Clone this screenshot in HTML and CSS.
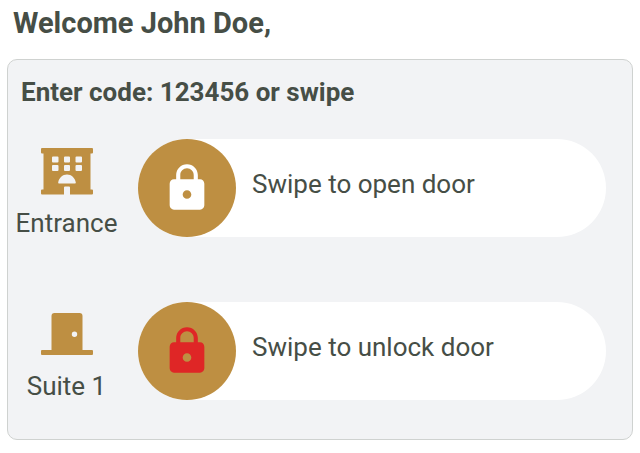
FILE: index.html
```
<!DOCTYPE html>
<html lang="en">
<head>
    <meta charset="utf-8" />
    <meta name="viewport" content="width=device-width, initial-scale=1" />
    <title>Door access</title>
    <link rel="stylesheet" href="styles.css">
</head>
<body>
    <h1 class="welcome">Welcome John Doe,</h1>
    <main class="panel">
        <h2 class="code">Enter code: 123456 or swipe</h2>

        <!-- entrance -->
        <div class="door">
            <div class="place">
                <svg class="place-icon" viewBox="0 0 52 47" aria-hidden="true">
                    <path fill-rule="evenodd" d="M1 0H51Q52 0 52 1V4.500Q52 5.500 51 5.500H49.500V41.500H51Q52 41.500 52 42.500V45.500Q52 46.500 51 46.500H29V39.500Q29 38.500 28 38.500H24Q23 38.500 23 39.500V46.500H1Q0 46.500 0 45.500V42.500Q0 41.500 1 41.500H2.500V5.500H1Q0 5.500 0 4.500V1Q0 0 1 0Z
                        M12 8.500h4.500q1 0 1 1v4q0 1-1 1H12q-1 0-1-1v-4q0-1 1-1Z
                        M24 8.500h4q1 0 1 1v4q0 1-1 1h-4q-1 0-1-1v-4q0-1 1-1Z
                        M35.500 8.500H40q1 0 1 1v4q0 1-1 1h-4.500q-1 0-1-1v-4q0-1 1-1Z
                        M12 17h4.500q1 0 1 1v4q0 1-1 1H12q-1 0-1-1v-4q0-1 1-1Z
                        M24 17h4q1 0 1 1v4q0 1-1 1h-4q-1 0-1-1v-4q0-1 1-1Z
                        M35.500 17H40q1 0 1 1v4q0 1-1 1h-4.500q-1 0-1-1v-4q0-1 1-1Z
                        M18 35.500Q17 35.500 17.200 34.500C18 30 21.500 26.500 26 26.500S34 30 34.800 34.500Q35 35.500 34 35.500Z" />
                </svg>
                <span class="place-name" id="entrance">Entrance</span>
            </div>
            <div class="swipe">
                <button type="button" class="knob" aria-labelledby="entrance entrance-text">
                    <svg class="lock" viewBox="0 0 24 24" aria-hidden="true">
                        <path d="M18 8h-1V6c0-2.760-2.240-5-5-5S7 3.240 7 6v2H6c-1.100 0-2 .9-2 2v10c0 1.100.9 2 2 2h12c1.100 0 2-.9 2-2V10c0-1.100-.9-2-2-2zm-6 9c-1.100 0-2-.9-2-2s.9-2 2-2 2 .9 2 2-.9 2-2 2zm3.100-9H8.900V6c0-1.710 1.390-3.100 3.100-3.100s3.100 1.390 3.100 3.100v2z" />
                    </svg>
                </button>
                <span class="swipe-text" id="entrance-text">Swipe to open door</span>
            </div>
        </div>

        <!-- suite -->
        <div class="door">
            <div class="place">
                <svg class="place-icon" viewBox="0 0 52 47" aria-hidden="true">
                    <path fill-rule="evenodd" d="M13.500 2H38.500Q41.500 2 41.500 5V39H51Q52 39 52 40V43Q52 44 51 44H1Q0 44 0 43V40Q0 39 1 39H10.500V5Q10.500 2 13.500 2ZM33.500 20.500a2.700 2.700 0 1 0 0 5.400a2.700 2.700 0 1 0 0-5.400Z" />
                </svg>
                <span class="place-name" id="suite">Suite 1</span>
            </div>
            <div class="swipe">
                <button type="button" class="knob locked" aria-labelledby="suite suite-text">
                    <svg class="lock" viewBox="0 0 24 24" aria-hidden="true">
                        <path d="M18 8h-1V6c0-2.760-2.240-5-5-5S7 3.240 7 6v2H6c-1.100 0-2 .9-2 2v10c0 1.100.9 2 2 2h12c1.100 0 2-.9 2-2V10c0-1.100-.9-2-2-2zm-6 9c-1.100 0-2-.9-2-2s.9-2 2-2 2 .9 2 2-.9 2-2 2zm3.100-9H8.900V6c0-1.710 1.390-3.100 3.100-3.100s3.100 1.390 3.100 3.100v2z" />
                    </svg>
                </button>
                <span class="swipe-text" id="suite-text">Swipe to unlock door</span>
            </div>
        </div>
    </main>
</body>
</html>
```
FILE: styles.css
```
*{
    box-sizing:border-box;
}
body{
    margin:0;
    padding:7px;
    background-color:white;
    color:#464e46;
    font-family:Roboto, sans-serif;
    font-size:26px;
    line-height:32px;
}
.welcome{
    margin:0 6px 20px;
    font-size:29px;
    font-weight:bold;
    line-height:32px;
}
.panel{
    padding:16px 26px 37px 0;
    border:1px solid #cfd2d0;
    border-radius:10px;
    background-color:#f2f3f5;
}
.code{
    margin:0 0 31px 13px;
    font-size:26px;
    font-weight:bold;
    line-height:32px;
}
.door{
    display:flex;
    gap:13px;
}
.door + .door{
    margin-top:63px;
}
.place{
    display:flex;
    flex-direction:column;
    align-items:center;
    gap:12px;
    width:117px;
    padding-top:9px;
}
.place-icon{
    width:52px;
    height:47px;
    fill:#be8f42;
}
.swipe{
    display:flex;
    flex:1;
    align-items:center;
    gap:16px;
    height:98px;
    border-radius:49px;
    background-color:white;
}
.knob{
    display:flex;
    align-items:center;
    justify-content:center;
    width:98px;
    height:98px;
    padding:0;
    border:none;
    border-radius:50%;
    background-color:#be8f42;
    cursor:pointer;
}
.lock{
    width:52px;
    height:52px;
    fill:white;
}
.locked .lock{
    fill:#df2626;
}
.swipe-text{
    padding-bottom:8px;
}
```
